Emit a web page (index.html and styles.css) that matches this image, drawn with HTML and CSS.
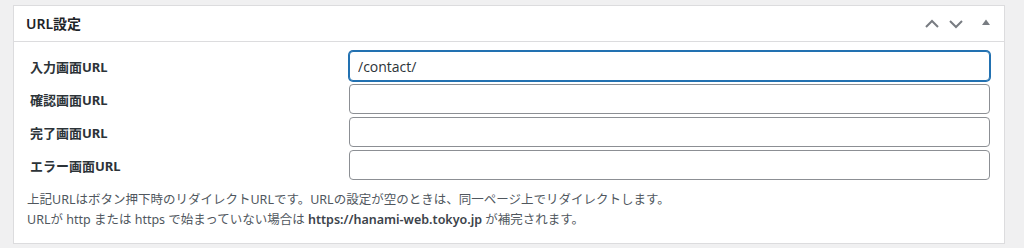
FILE: index.html
```html
<!DOCTYPE html>
<html lang="ja">
<head>
<meta charset="utf-8">
<link rel="stylesheet" href="styles.css">
</head>
<body>
<div class="postbox">
  <div class="postbox-header">
    <h2 class="hndle">URL設定</h2>
    <div class="handle-actions">
      <button class="act" aria-label="上へ移動">
        <svg width="16" height="16" viewBox="0 0 16 16"><path d="M2 11 L8 5 L14 11" fill="none" stroke="#787c82" stroke-width="2"/></svg>
      </button>
      <button class="act" aria-label="下へ移動">
        <svg width="16" height="16" viewBox="0 0 16 16"><path d="M2 5 L8 11 L14 5" fill="none" stroke="#787c82" stroke-width="2"/></svg>
      </button>
      <button class="act toggle" aria-label="パネルを切り替え">
        <svg width="10" height="10" viewBox="0 0 10 10"><path d="M1 8 L5 2.5 L9 8 Z" fill="#787c82"/></svg>
      </button>
    </div>
  </div>
  <div class="inside">
    <div class="form-grid">
      <label class="lbl" for="u1">入力画面URL</label>
      <input id="u1" class="field focus" type="text" value="/contact/">
      <label class="lbl" for="u2">確認画面URL</label>
      <input id="u2" class="field" type="text" value="">
      <label class="lbl" for="u3">完了画面URL</label>
      <input id="u3" class="field" type="text" value="">
      <label class="lbl" for="u4">エラー画面URL</label>
      <input id="u4" class="field" type="text" value="">
    </div>
    <p class="note">上記URLはボタン押下時のリダイレクトURLです。URLの設定が空のときは、同一ページ上でリダイレクトします。<br>URLが http または https で始まっていない場合は <strong>https://hanami-web.tokyo.jp</strong> が補完されます。</p>
  </div>
</div>
</body>
</html>
```

FILE: styles.css
```css
html, body {
  margin: 0;
  padding: 0;
  background: #f0f0f1;
  font-family: "Noto Sans", "Noto Sans CJK JP", sans-serif;
  color: #3c434a;
}
body {
  padding: 5px 0 0 13px;
}
.postbox {
  width: 990px;
  background: #fff;
  border: 1px solid #dcdcde;
  box-sizing: content-box;
}
.postbox-header {
  display: flex;
  align-items: center;
  justify-content: space-between;
  height: 35px;
  border-bottom: 1px solid #dcdcde;
}
.hndle {
  margin: 0;
  padding-left: 12px;
  font-size: 14px;
  font-weight: 600;
  color: #1d2327;
  line-height: 1;
}
.handle-actions {
  display: flex;
  align-items: center;
  padding-right: 0;
}
.act {
  border: 0;
  background: none;
  padding: 0;
  width: 24px;
  height: 32px;
  display: flex;
  align-items: center;
  justify-content: center;
  margin-left: 0;
}
.act svg { display: block; }
.act.toggle { width: 36px; margin-top: -3px; }
.inside {
  padding: 9px 14px 13px 13px;
}
.form-grid {
  display: grid;
  grid-template-columns: 322px 641px;
  row-gap: 3px;
  align-items: center;
}
.lbl {
  padding-left: 3px;
  font-size: 13px;
  font-weight: 700;
  color: #2c3338;
}
.field {
  box-sizing: border-box;
  height: 30px;
  width: 641px;
  margin: 0;
  border: 1px solid #8c8f94;
  border-radius: 4px;
  padding: 0 8px;
  font-family: "Open Sans", "Noto Sans", sans-serif;
  font-size: 14px;
  color: #2c3338;
  background: #fff;
  outline: none;
}
.field.focus {
  border-color: #2271b1;
  box-shadow: 0 0 0 1px #2271b1;
}
.note {
  margin: 10px 0 0 0;
  font-size: 12.5px;
  line-height: 20px;
  color: #50575e;
}
.note strong {
  font-weight: 600;
  color: #3c434a;
}
```
